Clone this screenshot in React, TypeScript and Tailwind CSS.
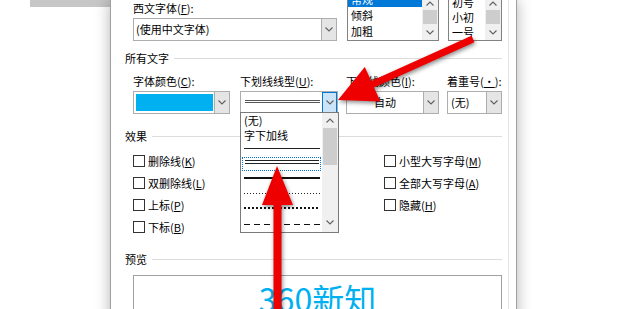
import React from "react";

function Chevron({ up = false }: { up?: boolean }) {
  return (
    <svg width="8" height="5" viewBox="0 0 8 5" className="block">
      <path
        d={up ? "M0.5 4.5 L4 1 L7.5 4.5" : "M0.5 0.5 L4 4 L7.5 0.5"}
        fill="none"
        stroke="#606060"
        strokeWidth="1.1"
      />
    </svg>
  );
}

function ComboButton({ active = false }: { active?: boolean }) {
  return (
    <div
      className={
        active
          ? "w-[15px] shrink-0 flex items-center justify-center bg-[#cce4f7] border border-[#0078d7]"
          : "w-[15px] shrink-0 flex items-center justify-center bg-[#e5e5e5] border-l border-[#adadad]"
      }
    >
      <Chevron />
    </div>
  );
}

function Header({ text }: { text: string }) {
  return (
    <div className="flex items-center h-[16px] leading-[16px]">
      <span>{text}</span>
      <div className="flex-1 h-px bg-[#dcdcdc] ml-[5px]" />
    </div>
  );
}

function Check({ label, k }: { label: string; k: string }) {
  return (
    <div className="flex items-center h-[22px]">
      <div className="w-[12px] h-[12px] border border-[#333] bg-white" />
      <span className="ml-[3px] leading-[16px] whitespace-nowrap">
        {label}(<u>{k}</u>)
      </span>
    </div>
  );
}

function TopScroll() {
  return (
    <div className="w-[16px] shrink-0 bg-[#f0f0f0] flex flex-col items-center">
      <div className="pt-[1px]">
        <Chevron up />
      </div>
      <div className="mt-[4px] w-[14px] h-[14px] bg-[#cdcdcd]" />
      <div className="mt-[6px]">
        <Chevron />
      </div>
    </div>
  );
}

export default function App() {
  return (
    <div className="relative w-[620px] h-[309px] overflow-hidden bg-white flex font-['Noto_Sans_CJK_SC',sans-serif] text-[11px] text-black">
      <div className="w-[110px] shrink-0">
        <div className="ml-[30px] h-[7px] bg-[#c6c6c6]" />
      </div>

      {/* dialog */}
      <div className="w-[407px] shrink-0 h-[340px] border-x border-[#a0a0a0] bg-white shadow-[0_0_14px_rgba(0,0,0,0.3)]">
        <div className="w-[398px] h-full border-r border-[#e3e3e3] pl-[14px] pr-[6px]">
          {/* font row */}
          <div className="flex pl-[8px]">
            <div className="w-[204px]">
              <div className="h-[16px] leading-[16px]">
                西文字体(<u>F</u>):
              </div>
              <div className="mt-[2px] flex h-[23px] border border-[#adadad]">
                <div className="flex-1 flex items-center pl-[2px]">(使用中文字体)</div>
                <ComboButton />
              </div>
            </div>
            <div className="ml-[10px] w-[92px] h-[41px] border-x border-b border-[#828282] flex overflow-hidden">
              <div className="flex-1 -mt-[9px] flex flex-col">
                <div className="h-[16px] leading-[16px] pl-[3px] bg-[#0078d7] text-white">常规</div>
                <div className="h-[16px] leading-[16px] pl-[3px]">倾斜</div>
                <div className="h-[16px] leading-[16px] pl-[3px]">加粗</div>
              </div>
              <TopScroll />
            </div>
            <div className="ml-[9px] w-[54px] h-[41px] border-x border-b border-[#828282] flex overflow-hidden">
              <div className="flex-1 -mt-[5px] flex flex-col">
                <div className="h-[15px] leading-[15px] pl-[3px]">初号</div>
                <div className="h-[15px] leading-[15px] pl-[3px]">小初</div>
                <div className="h-[15px] leading-[15px] pl-[3px]">一号</div>
              </div>
              <TopScroll />
            </div>
          </div>

          {/* all text */}
          <div className="mt-[9px]">
            <Header text="所有文字" />
          </div>
          <div className="mt-[7px] flex pl-[8px]">
            <div className="w-[97px]">
              <div className="h-[16px] leading-[16px] whitespace-nowrap">
                字体颜色(<u>C</u>):
              </div>
              <div className="mt-[2px] flex h-[23px] border border-[#adadad]">
                <div className="flex-1 pl-[2px] pr-[1px] py-[2px]">
                  <div className="h-full bg-[#00b0f0]" />
                </div>
                <ComboButton />
              </div>
            </div>
            <div className="ml-[10px] w-[98px] relative">
              <div className="h-[16px] leading-[16px] whitespace-nowrap">
                下划线线型(<u>U</u>):
              </div>
              <div className="mt-[2px] flex h-[23px] border border-[#adadad]">
                <div className="flex-1 flex flex-col pl-[4px] pr-[2px] pt-[8px]">
                  <div className="h-px bg-[#555]" />
                  <div className="mt-[1px] h-px bg-[#555]" />
                </div>
                <ComboButton active />
              </div>

              {/* open list */}
              <div className="absolute left-0 top-[39px] w-[99px] h-[121px] bg-white border border-[#7a7a7a] flex z-10">
                <div className="flex-1 flex flex-col">
                  <div className="h-[15px] leading-[15px] pl-[3px]">(无)</div>
                  <div className="h-[15px] leading-[15px] pl-[3px]">字下加线</div>
                  <div className="h-[12px] pl-[3px] pr-[2px] pt-[5px]">
                    <div className="h-px bg-[#222]" />
                  </div>
                  <div className="h-[18px] pt-[2px] px-[1px]">
                    <div className="h-[14px] border border-dotted border-[#0078d7] pt-[2px] pl-[2px] pr-[1px]">
                      <div className="h-px bg-[#222]" />
                      <div className="mt-[2px] h-px bg-[#222]" />
                    </div>
                  </div>
                  <div className="h-[12px] pl-[3px] pr-[2px] pt-[4px]">
                    <div className="h-[2px] bg-[#111]" />
                  </div>
                  <div className="h-[15px] pl-[3px] pr-[2px] pt-[8px]">
                    <div className="h-px bg-[repeating-linear-gradient(90deg,#222_0_1px,transparent_1px_3px)]" />
                  </div>
                  <div className="h-[14px] pl-[3px] pr-[2px] pt-[7px]">
                    <div className="h-[2px] bg-[repeating-linear-gradient(90deg,#111_0_2px,transparent_2px_4px)]" />
                  </div>
                  <div className="h-[18px] pl-[3px] pr-[2px] pt-[10px]">
                    <div className="h-px bg-[repeating-linear-gradient(90deg,#111_0_6px,transparent_6px_10px)]" />
                  </div>
                </div>
                <div className="w-[16px] shrink-0 bg-[#f0f0f0] flex flex-col items-center">
                  <div className="pt-[5px]">
                    <Chevron up />
                  </div>
                  <div className="mt-[5px] w-[14px] h-[37px] bg-[#cdcdcd]" />
                  <div className="mt-auto pb-[7px]">
                    <Chevron />
                  </div>
                </div>
              </div>
            </div>
            <div className="ml-[8px] w-[93px]">
              <div className="h-[16px] leading-[16px] whitespace-nowrap">
                下划线颜色(<u>I</u>):
              </div>
              <div className="mt-[2px] flex h-[23px] border border-[#adadad]">
                <div className="flex-1 flex items-center justify-center">自动</div>
                <ComboButton />
              </div>
            </div>
            <div className="ml-[8px] w-[55px]">
              <div className="h-[16px] leading-[16px] whitespace-nowrap">
                着重号(<u>·</u>):
              </div>
              <div className="mt-[2px] flex h-[23px] border border-[#adadad]">
                <div className="flex-1 flex items-center pl-[3px]">(无)</div>
                <ComboButton />
              </div>
            </div>
          </div>

          {/* effects */}
          <div className="mt-[14px]">
            <Header text="效果" />
          </div>
          <div className="mt-[6px] flex pl-[8px]">
            <div className="w-[251px]">
              <Check label="删除线" k="K" />
              <Check label="双删除线" k="L" />
              <Check label="上标" k="P" />
              <Check label="下标" k="B" />
            </div>
            <div>
              <Check label="小型大写字母" k="M" />
              <Check label="全部大写字母" k="A" />
              <Check label="隐藏" k="H" />
            </div>
          </div>

          {/* preview */}
          <div className="mt-[13px]">
            <Header text="预览" />
          </div>
          <div className="mt-[8px] ml-[8px] h-[60px] border border-[#a0a0a0] pt-[6px] text-center text-[32px] leading-none text-[#00b0f0]">
            360新知
          </div>
        </div>
      </div>

      {/* red arrows */}
      <svg
        className="absolute left-0 top-0 z-20 pointer-events-none drop-shadow-[1px_2px_2px_rgba(0,0,0,0.45)]"
        width="620"
        height="309"
      >
        <polygon
          points="338,100 380.4,101.6 374,87.5 474.4,42.2 471.6,35.8 371.2,81.1 364.8,67"
          fill="#ee0000"
        />
        <polygon
          points="277,166 293,205 281.5,205 281.5,320 273.5,320 273.5,205 262,205"
          fill="#ee0000"
        />
      </svg>
    </div>
  );
}
